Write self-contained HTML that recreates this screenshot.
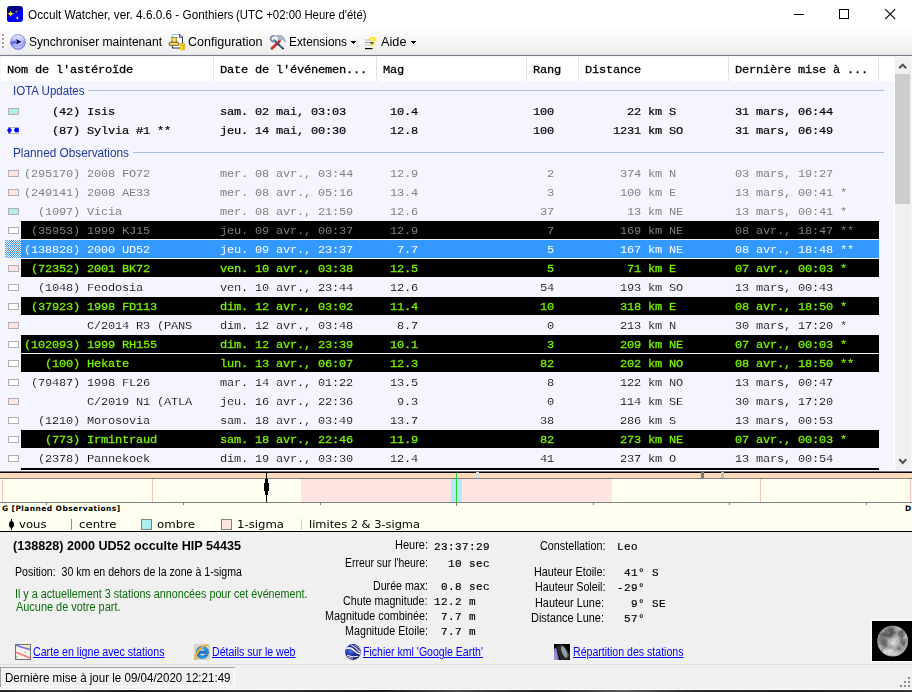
<!DOCTYPE html>
<html lang="fr"><head><meta charset="utf-8"><title>Occult Watcher</title>
<style>
html,body{margin:0;padding:0;}
body{width:912px;height:692px;overflow:hidden;background:#fff;position:relative;font-family:"Liberation Sans",sans-serif;}
.b{position:absolute;}
.t{position:absolute;white-space:pre;line-height:25px;height:25px;}
.fs{font-family:"Liberation Sans",sans-serif;}
.fm{font-family:"Liberation Mono",monospace;}
.fd{font-family:"DejaVu Sans","Liberation Sans",sans-serif;}
svg{position:absolute;overflow:visible;}
a.t{text-decoration:underline;}
</style></head><body>

<div class="b" style="left:0px;top:0px;width:912px;height:30px;background:#fff;"></div>
<svg style="left:7px;top:6px" width="16" height="16" viewBox="0 0 16 16">
<defs><clipPath id="ic"><rect x="0" y="0" width="16" height="16" rx="3.2"/></clipPath></defs>
<g clip-path="url(#ic)"><rect width="16" height="16" fill="#000084"/>
<path d="M16 2.5L0 10.5V16H16z" fill="#0000fa"/>
<path d="M13.5 16L16 13.5V16z" fill="#20d0ff"/>
<path d="M3.6 4.4l.75 2.25 2.9 1.05-2.9 1.05-.75 2.25-.75-2.25L0.2 7.7l2.650-1.05z" fill="#ffef10"/>
<circle cx="3.600" cy="7.7" r="1.5" fill="#ffff20"/>
<path d="M9.300 4.200l.5 1 1.100.4-1.100.4-.5 1.100-.5-1.100-1.100-.4 1.100-.4z" fill="#b8a820"/>
<path d="M10.300 10.300l.6 1.300 1.200.5-1.200.4-.6 1.200-.6-1.200-1.200-.4 1.200-.5z" fill="#f0e020"/>
</g></svg>
<span id="title" class="t fs" style="left:28px;top:3px;font-size:12.5px;color:#000;transform:scale(0.9410,1);transform-origin:0 16px;">Occult Watcher, ver. 4.6.0.6 - Gonthiers</span>
<span id="title2" class="t fs" style="left:236px;top:3px;font-size:12.5px;color:#000;transform:scale(0.9076,1);transform-origin:0 16px;">(UTC +02:00 Heure d'été)</span>
<svg style="left:780px;top:0" width="132" height="30" viewBox="0 0 132 30" shape-rendering="crispEdges">
<rect x="14" y="14" width="10" height="1" fill="#000"/>
<rect x="59.5" y="9.5" width="9" height="9" fill="none" stroke="#000" stroke-width="1"/>
<g shape-rendering="geometricPrecision"><path d="M105.2 9.200l10 10M115.2 9.200l-10 10" stroke="#000" stroke-width="1.1" fill="none"/></g>
</svg>
<div class="b" style="left:0px;top:30px;width:912px;height:25px;background:linear-gradient(#fcfcfc 0%,#f9f9f9 30%,#f2f2f2 65%,#ededed 95%,#dedee2 100%);"></div>
<div class="b" style="left:0px;top:55px;width:912px;height:1px;background:#787c88;"></div>
<div class="b" style="left:3px;top:35px;width:2px;height:2px;background:#fff;"></div>
<div class="b" style="left:2px;top:34px;width:2px;height:2px;background:#a2a2a2;"></div>
<div class="b" style="left:3px;top:39px;width:2px;height:2px;background:#fff;"></div>
<div class="b" style="left:2px;top:38px;width:2px;height:2px;background:#a2a2a2;"></div>
<div class="b" style="left:3px;top:43px;width:2px;height:2px;background:#fff;"></div>
<div class="b" style="left:2px;top:42px;width:2px;height:2px;background:#a2a2a2;"></div>
<div class="b" style="left:3px;top:47px;width:2px;height:2px;background:#fff;"></div>
<div class="b" style="left:2px;top:46px;width:2px;height:2px;background:#a2a2a2;"></div>
<svg style="left:10px;top:34px" width="16" height="16" viewBox="0 0 16 16">
<defs><radialGradient id="g1" cx="0.5" cy="0.4" r="0.7"><stop offset="0" stop-color="#dfe3ff"/><stop offset="0.5" stop-color="#a8b0f6"/><stop offset="1" stop-color="#6670e4"/></radialGradient><clipPath id="sc"><circle cx="8" cy="8" r="7.700"/></clipPath></defs>
<circle cx="8" cy="8" r="7.700" fill="url(#g1)"/>
<g clip-path="url(#sc)">
<path d="M0 8.500c2.500-1.600 5-2.200 7.500-1.500l-.3 2.700C5 9 2.500 9.800 0 11.500z" fill="#4c58dc" opacity="0.750"/>
<path d="M1 6.500c2.200-2 5-3 8-2.500 2 .4 3.800 1.300 5.500 2.800C13.500 3 11 1 8 1S2 3 1 6.500z" fill="#fff" opacity="0.500"/>
<path d="M2.500 11.500c1.500 2 3.500 3 5.500 3s4.200-1.200 5.500-3.500c-2 1.300-3.800 1.900-5.800 1.900s-3.700-.5-5.200-1.400z" fill="#e4e8ff" opacity="0.550"/>
</g>
<circle cx="8" cy="8" r="7.400" fill="none" stroke="#7880dc" stroke-width="0.700" stroke-dasharray="2.200 1.300"/>
<path d="M6 5L11.400 7.700L6.200 10.600L7.200 7.800z" fill="#060648"/>
</svg>
<span id="tb1" class="t fs" style="left:28.5px;top:30px;font-size:12.5px;color:#000;transform:scale(0.9618,1);transform-origin:0 16px;">Synchroniser maintenant</span>
<svg style="left:168px;top:33px" width="18" height="18" viewBox="0 0 18 18">
<path d="M4.500 1.500h7l3 3v10.500h-10z" fill="#fff"/>
<path d="M4.500 4V1.500h7" fill="none" stroke="#9cc0ec" stroke-width="1"/>
<path d="M11.500 1.500l3 3v10.500h-10v-2" fill="none" stroke="#2c3c58" stroke-width="1.100"/>
<path d="M11.500 1.500v3h3" fill="#c8d4e8" stroke="#2c3c58" stroke-width="0.8"/>
<path d="M3 4.500h6.500l-1.200 1.800 1 2.700h-6l1-2.700z" fill="#f2c838" stroke="#8a7a28" stroke-width="0.8"/>
<path d="M5.200 5l.8 3.500M7 5l-.3 3.500" stroke="#fff2a0" stroke-width="0.8"/>
<rect x="1" y="9.300" width="10" height="3.200" rx="0.8" fill="#d8b040" stroke="#6e6a28" stroke-width="0.8"/>
<rect x="2.500" y="10.500" width="7" height="0.9" fill="#fff4b0"/>
<rect x="12" y="11" width="5" height="6.300" rx="1.300" fill="#eab818"/>
<rect x="12.800" y="11.500" width="1.300" height="5.300" fill="#ffe060"/>
<ellipse cx="14.500" cy="11.300" rx="2.500" ry="1" fill="#f6d040" stroke="#b88c10" stroke-width="0.5"/>
</svg>
<span id="tb2" class="t fs" style="left:188px;top:30px;font-size:12.5px;color:#000;transform:scale(1.0019,1);transform-origin:0 16px;">Configuration</span>
<svg style="left:269px;top:33px" width="18" height="18" viewBox="0 0 18 18">
<path d="M10.500 8L3 15.300" stroke="#c82828" stroke-width="2.900" stroke-linecap="round"/>
<path d="M9.800 7.600L3 14" stroke="#f07060" stroke-width="0.900" stroke-linecap="round"/>
<path d="M6.500 3.300c2.500-1.600 6-1.200 7.800.8 1 1.100 1.700 2.500 2.200 4.200-.5.800-1.300 1-1.900.4-.2-1.200-.8-2.300-1.700-3l-1.800 2-2.300-2 1.300-1.800c-1.200-.4-2.400-.5-3.600-.6z" fill="#b4bed0" stroke="#7684a0" stroke-width="0.600"/>
<circle cx="14.700" cy="8.300" r="0.700" fill="#fff"/>
<path d="M5.400 7.200L14 15.500" stroke="#1c2c50" stroke-width="1.900" stroke-linecap="round"/>
<path d="M5.800 7.200L14 15.100" stroke="#fff" stroke-width="0.900" stroke-dasharray="0.900 0.900"/>
<path d="M5.700 3.300A2.700 2.700 0 1 0 6 7.800" fill="none" stroke="#7688a8" stroke-width="1.800"/>
<path d="M5 3.600A2 2 0 0 0 3 6" fill="none" stroke="#c8d4e8" stroke-width="0.800"/>
</svg>
<span id="tb3" class="t fs" style="left:288.5px;top:30px;font-size:12.5px;color:#000;transform:scale(0.9484,1);transform-origin:0 16px;">Extensions</span>
<svg style="left:351px;top:41px" width="6" height="4" viewBox="0 0 6 4" shape-rendering="crispEdges"><rect x="0" y="0" width="5" height="1"/><rect x="1" y="1" width="3" height="1"/><rect x="2" y="2" width="1" height="1"/></svg>
<svg style="left:364px;top:34px" width="14" height="17" viewBox="0 0 14 17">
<rect x="1" y="5.500" width="7" height="1" fill="#b8b8b8"/><rect x="1" y="8" width="7" height="1" fill="#9a9a9a"/><rect x="1" y="10.500" width="7" height="1" fill="#c8c8c8"/>
<rect x="1" y="14" width="7.500" height="1.200" fill="#000"/>
<text x="8.700" y="11.600" font-family="Liberation Sans, sans-serif" font-size="13" font-weight="bold" text-anchor="middle" fill="#ffe600" stroke="#ffe600" stroke-width="0.600">?</text>
<rect x="6.500" y="8.300" width="3" height="1.300" fill="#202020"/>
</svg>
<span id="tb4" class="t fs" style="left:381px;top:30px;font-size:12.5px;color:#000;transform:scale(1.0187,1);transform-origin:0 16px;">Aide</span>
<svg style="left:411px;top:41px" width="6" height="4" viewBox="0 0 6 4" shape-rendering="crispEdges"><rect x="0" y="0" width="5" height="1"/><rect x="1" y="1" width="3" height="1"/><rect x="2" y="2" width="1" height="1"/></svg>
<div class="b" style="left:0px;top:56px;width:912px;height:415px;background:#f5f5ff;"></div>
<div class="b" style="left:1px;top:57px;width:894px;height:24px;background:#fff;"></div>
<div class="b" style="left:894px;top:81px;width:1px;height:390px;background:#fff;"></div>
<div class="b" style="left:213px;top:57px;width:1px;height:24px;background:#e2e2e2;"></div>
<div class="b" style="left:376px;top:57px;width:1px;height:24px;background:#e2e2e2;"></div>
<div class="b" style="left:526px;top:57px;width:1px;height:24px;background:#e2e2e2;"></div>
<div class="b" style="left:578px;top:57px;width:1px;height:24px;background:#e2e2e2;"></div>
<div class="b" style="left:728px;top:57px;width:1px;height:24px;background:#e2e2e2;"></div>
<div class="b" style="left:878px;top:57px;width:1px;height:24px;background:#e2e2e2;"></div>
<span id="h0" class="t fm" style="left:7px;top:58px;font-size:12px;color:#000;-webkit-text-stroke:0.3px;letter-spacing:-0.201px;transform:scale(1.0000,0.85);transform-origin:0 15px;">Nom de l'astéroïde</span>
<span id="h1" class="t fm" style="left:220px;top:58px;font-size:12px;color:#000;-webkit-text-stroke:0.3px;letter-spacing:-0.202px;transform:scale(1.0000,0.85);transform-origin:0 15px;">Date de l'événemen...</span>
<span id="h2" class="t fm" style="left:383px;top:58px;font-size:12px;color:#000;-webkit-text-stroke:0.3px;letter-spacing:-0.203px;transform:scale(1.0000,0.85);transform-origin:0 15px;">Mag</span>
<span id="h3" class="t fm" style="left:533px;top:58px;font-size:12px;color:#000;-webkit-text-stroke:0.3px;letter-spacing:-0.203px;transform:scale(1.0000,0.85);transform-origin:0 15px;">Rang</span>
<span id="h4" class="t fm" style="left:585px;top:58px;font-size:12px;color:#000;-webkit-text-stroke:0.3px;letter-spacing:-0.201px;transform:scale(1.0000,0.85);transform-origin:0 15px;">Distance</span>
<span id="h5" class="t fm" style="left:735px;top:58px;font-size:12px;color:#000;-webkit-text-stroke:0.3px;letter-spacing:-0.201px;transform:scale(1.0000,0.85);transform-origin:0 15px;">Dernière mise à ...</span>
<div class="b" style="left:895px;top:57px;width:16px;height:414px;background:#f0f0f0;"></div>
<div class="b" style="left:895px;top:74px;width:15px;height:130px;background:#cdcdcd;"></div>
<svg style="left:895px;top:56px" width="16" height="18" viewBox="0 0 16 18"><path d="M4.200 12.300L7.700 8.600l3.500 3.700" fill="none" stroke="#505050" stroke-width="2"/></svg>
<svg style="left:895px;top:453px" width="16" height="18" viewBox="0 0 16 18"><path d="M4.200 6.300l3.500 3.700 3.500-3.700" fill="none" stroke="#505050" stroke-width="2"/></svg>
<span id="g1" class="t fs" style="left:13px;top:79px;font-size:12.5px;color:#1c389c;transform:scale(0.9215,1);transform-origin:0 16px;">IOTA Updates</span>
<div class="b" style="left:88px;top:90px;width:796px;height:1px;background:#a9bcd8;"></div>
<span id="g2" class="t fs" style="left:13px;top:141px;font-size:12.5px;color:#1c389c;transform:scale(0.9431,1);transform-origin:0 16px;">Planned Observations</span>
<div class="b" style="left:133px;top:152px;width:751px;height:1px;background:#a9bcd8;"></div>
<div class="b" style="left:8px;top:108px;width:9px;height:5px;background:#aeeeee;border:1px solid #b2aeb4;"></div>
<span id="r0c0" class="t fm" style="left:52px;top:100px;font-size:12px;color:#000;-webkit-text-stroke:0.2px;letter-spacing:-0.201px;transform:scale(1.0000,0.85);transform-origin:0 15px;">(42) Isis</span>
<span id="r0c1" class="t fm" style="left:220px;top:100px;font-size:12px;color:#000;-webkit-text-stroke:0.2px;letter-spacing:-0.201px;transform:scale(1.0000,0.85);transform-origin:0 15px;">sam. 02 mai, 03:03</span>
<span id="r0c2" class="t fm" style="left:390px;top:100px;font-size:12px;color:#000;-webkit-text-stroke:0.2px;letter-spacing:-0.203px;transform:scale(1.0000,0.85);transform-origin:0 15px;">10.4</span>
<span id="r0c3" class="t fm" style="left:533px;top:100px;font-size:12px;color:#000;-webkit-text-stroke:0.2px;letter-spacing:-0.203px;transform:scale(1.0000,0.85);transform-origin:0 15px;">100</span>
<span id="r0c4" class="t fm" style="left:627px;top:100px;font-size:12px;color:#000;-webkit-text-stroke:0.2px;letter-spacing:-0.203px;transform:scale(1.0000,0.85);transform-origin:0 15px;">22 km S</span>
<span id="r0c5" class="t fm" style="left:735px;top:100px;font-size:12px;color:#000;-webkit-text-stroke:0.2px;letter-spacing:-0.202px;transform:scale(1.0000,0.85);transform-origin:0 15px;">31 mars, 06:44</span>
<div class="b" style="left:8px;top:127px;width:9px;height:5px;background:#fff;border:1px solid #b4b4b4;"></div>
<svg style="left:6px;top:126px" width="14" height="9" viewBox="0 0 14 9"><path d="M3.500 1.400L5.700 4.300 3.500 7.300 1.300 4.300z" fill="#0000ff" stroke="#0000ff" stroke-width="0.600" stroke-linejoin="round"/><circle cx="10.600" cy="4.200" r="2.400" fill="#0000ff"/></svg>
<span id="r1c0" class="t fm" style="left:52px;top:119px;font-size:12px;color:#000;-webkit-text-stroke:0.2px;letter-spacing:-0.201px;transform:scale(1.0000,0.85);transform-origin:0 15px;">(87) Sylvia #1 **</span>
<span id="r1c1" class="t fm" style="left:220px;top:119px;font-size:12px;color:#000;-webkit-text-stroke:0.2px;letter-spacing:-0.201px;transform:scale(1.0000,0.85);transform-origin:0 15px;">jeu. 14 mai, 00:30</span>
<span id="r1c2" class="t fm" style="left:390px;top:119px;font-size:12px;color:#000;-webkit-text-stroke:0.2px;letter-spacing:-0.203px;transform:scale(1.0000,0.85);transform-origin:0 15px;">12.8</span>
<span id="r1c3" class="t fm" style="left:533px;top:119px;font-size:12px;color:#000;-webkit-text-stroke:0.2px;letter-spacing:-0.203px;transform:scale(1.0000,0.85);transform-origin:0 15px;">100</span>
<span id="r1c4" class="t fm" style="left:613px;top:119px;font-size:12px;color:#000;-webkit-text-stroke:0.2px;letter-spacing:-0.202px;transform:scale(1.0000,0.85);transform-origin:0 15px;">1231 km SO</span>
<span id="r1c5" class="t fm" style="left:735px;top:119px;font-size:12px;color:#000;-webkit-text-stroke:0.2px;letter-spacing:-0.202px;transform:scale(1.0000,0.85);transform-origin:0 15px;">31 mars, 06:49</span>
<div class="b" style="left:8px;top:170px;width:9px;height:5px;background:#ffe4e1;border:1px solid #b2aeb4;"></div>
<span id="r2c0" class="t fm" style="left:24px;top:162px;font-size:12px;color:#808080;letter-spacing:-0.201px;transform:scale(1.0000,0.85);transform-origin:0 15px;">(295170) 2008 FO72</span>
<span id="r2c1" class="t fm" style="left:220px;top:162px;font-size:12px;color:#808080;letter-spacing:-0.201px;transform:scale(1.0000,0.85);transform-origin:0 15px;">mer. 08 avr., 03:44</span>
<span id="r2c2" class="t fm" style="left:390px;top:162px;font-size:12px;color:#808080;letter-spacing:-0.203px;transform:scale(1.0000,0.85);transform-origin:0 15px;">12.9</span>
<span id="r2c3" class="t fm" style="left:547px;top:162px;font-size:12px;color:#808080;letter-spacing:-0.203px;transform:scale(1.0000,0.85);transform-origin:0 15px;">2</span>
<span id="r2c4" class="t fm" style="left:620px;top:162px;font-size:12px;color:#808080;letter-spacing:-0.201px;transform:scale(1.0000,0.85);transform-origin:0 15px;">374 km N</span>
<span id="r2c5" class="t fm" style="left:735px;top:162px;font-size:12px;color:#808080;letter-spacing:-0.202px;transform:scale(1.0000,0.85);transform-origin:0 15px;">03 mars, 19:27</span>
<div class="b" style="left:8px;top:189px;width:9px;height:5px;background:#ffe4e1;border:1px solid #b2aeb4;"></div>
<span id="r3c0" class="t fm" style="left:24px;top:181px;font-size:12px;color:#808080;letter-spacing:-0.201px;transform:scale(1.0000,0.85);transform-origin:0 15px;">(249141) 2008 AE33</span>
<span id="r3c1" class="t fm" style="left:220px;top:181px;font-size:12px;color:#808080;letter-spacing:-0.201px;transform:scale(1.0000,0.85);transform-origin:0 15px;">mer. 08 avr., 05:16</span>
<span id="r3c2" class="t fm" style="left:390px;top:181px;font-size:12px;color:#808080;letter-spacing:-0.203px;transform:scale(1.0000,0.85);transform-origin:0 15px;">13.4</span>
<span id="r3c3" class="t fm" style="left:547px;top:181px;font-size:12px;color:#808080;letter-spacing:-0.203px;transform:scale(1.0000,0.85);transform-origin:0 15px;">3</span>
<span id="r3c4" class="t fm" style="left:620px;top:181px;font-size:12px;color:#808080;letter-spacing:-0.201px;transform:scale(1.0000,0.85);transform-origin:0 15px;">100 km E</span>
<span id="r3c5" class="t fm" style="left:735px;top:181px;font-size:12px;color:#808080;letter-spacing:-0.201px;transform:scale(1.0000,0.85);transform-origin:0 15px;">13 mars, 00:41 *</span>
<div class="b" style="left:8px;top:208px;width:9px;height:5px;background:#aeeeee;border:1px solid #b2aeb4;"></div>
<span id="r4c0" class="t fm" style="left:38px;top:200px;font-size:12px;color:#808080;letter-spacing:-0.202px;transform:scale(1.0000,0.85);transform-origin:0 15px;">(1097) Vicia</span>
<span id="r4c1" class="t fm" style="left:220px;top:200px;font-size:12px;color:#808080;letter-spacing:-0.201px;transform:scale(1.0000,0.85);transform-origin:0 15px;">mer. 08 avr., 21:59</span>
<span id="r4c2" class="t fm" style="left:390px;top:200px;font-size:12px;color:#808080;letter-spacing:-0.203px;transform:scale(1.0000,0.85);transform-origin:0 15px;">12.6</span>
<span id="r4c3" class="t fm" style="left:540px;top:200px;font-size:12px;color:#808080;letter-spacing:-0.203px;transform:scale(1.0000,0.85);transform-origin:0 15px;">37</span>
<span id="r4c4" class="t fm" style="left:627px;top:200px;font-size:12px;color:#808080;letter-spacing:-0.201px;transform:scale(1.0000,0.85);transform-origin:0 15px;">13 km NE</span>
<span id="r4c5" class="t fm" style="left:735px;top:200px;font-size:12px;color:#808080;letter-spacing:-0.201px;transform:scale(1.0000,0.85);transform-origin:0 15px;">13 mars, 00:41 *</span>
<div class="b" style="left:21px;top:221px;width:858px;height:18px;background:#000;"></div>
<div class="b" style="left:8px;top:227px;width:9px;height:5px;background:#ffffff;border:1px solid #b2aeb4;"></div>
<span id="r5c0" class="t fm" style="left:31px;top:219px;font-size:12px;color:#808080;letter-spacing:-0.201px;transform:scale(1.0000,0.85);transform-origin:0 15px;">(35953) 1999 KJ15</span>
<span id="r5c1" class="t fm" style="left:220px;top:219px;font-size:12px;color:#808080;letter-spacing:-0.201px;transform:scale(1.0000,0.85);transform-origin:0 15px;">jeu. 09 avr., 00:37</span>
<span id="r5c2" class="t fm" style="left:390px;top:219px;font-size:12px;color:#808080;letter-spacing:-0.203px;transform:scale(1.0000,0.85);transform-origin:0 15px;">12.9</span>
<span id="r5c3" class="t fm" style="left:547px;top:219px;font-size:12px;color:#808080;letter-spacing:-0.203px;transform:scale(1.0000,0.85);transform-origin:0 15px;">7</span>
<span id="r5c4" class="t fm" style="left:620px;top:219px;font-size:12px;color:#808080;letter-spacing:-0.201px;transform:scale(1.0000,0.85);transform-origin:0 15px;">169 km NE</span>
<span id="r5c5" class="t fm" style="left:735px;top:219px;font-size:12px;color:#808080;letter-spacing:-0.201px;transform:scale(1.0000,0.85);transform-origin:0 15px;">08 avr., 18:47 **</span>
<div class="b" style="left:21px;top:240px;width:858px;height:18px;background:#3399ff;"></div>
<svg style="left:5px;top:240px" width="16" height="18" viewBox="0 0 16 18" shape-rendering="crispEdges"><defs><pattern id="dp" width="2" height="2" patternUnits="userSpaceOnUse"><rect width="2" height="2" fill="#fff"/><rect width="1" height="1" fill="#3399ff"/><rect x="1" y="1" width="1" height="1" fill="#3399ff"/></pattern></defs><rect width="16" height="18" fill="url(#dp)"/><rect x="3.5" y="6.5" width="10" height="6" fill="none" stroke="#a8b4c8" stroke-width="1"/></svg>
<span id="r6c0" class="t fm" style="left:24px;top:238px;font-size:12px;color:#fff;letter-spacing:-0.201px;transform:scale(1.0000,0.85);transform-origin:0 15px;">(138828) 2000 UD52</span>
<span id="r6c1" class="t fm" style="left:220px;top:238px;font-size:12px;color:#fff;letter-spacing:-0.201px;transform:scale(1.0000,0.85);transform-origin:0 15px;">jeu. 09 avr., 23:37</span>
<span id="r6c2" class="t fm" style="left:397px;top:238px;font-size:12px;color:#fff;letter-spacing:-0.203px;transform:scale(1.0000,0.85);transform-origin:0 15px;">7.7</span>
<span id="r6c3" class="t fm" style="left:547px;top:238px;font-size:12px;color:#fff;letter-spacing:-0.203px;transform:scale(1.0000,0.85);transform-origin:0 15px;">5</span>
<span id="r6c4" class="t fm" style="left:620px;top:238px;font-size:12px;color:#fff;letter-spacing:-0.201px;transform:scale(1.0000,0.85);transform-origin:0 15px;">167 km NE</span>
<span id="r6c5" class="t fm" style="left:735px;top:238px;font-size:12px;color:#fff;letter-spacing:-0.201px;transform:scale(1.0000,0.85);transform-origin:0 15px;">08 avr., 18:48 **</span>
<div class="b" style="left:21px;top:259px;width:858px;height:18px;background:#000;"></div>
<div class="b" style="left:8px;top:265px;width:9px;height:5px;background:#ffe4e1;border:1px solid #b2aeb4;"></div>
<span id="r7c0" class="t fm" style="left:31px;top:257px;font-size:12px;color:#78f000;-webkit-text-stroke:0.3px;letter-spacing:-0.201px;transform:scale(1.0000,0.85);transform-origin:0 15px;">(72352) 2001 BK72</span>
<span id="r7c1" class="t fm" style="left:220px;top:257px;font-size:12px;color:#78f000;-webkit-text-stroke:0.3px;letter-spacing:-0.201px;transform:scale(1.0000,0.85);transform-origin:0 15px;">ven. 10 avr., 03:38</span>
<span id="r7c2" class="t fm" style="left:390px;top:257px;font-size:12px;color:#78f000;-webkit-text-stroke:0.3px;letter-spacing:-0.203px;transform:scale(1.0000,0.85);transform-origin:0 15px;">12.5</span>
<span id="r7c3" class="t fm" style="left:547px;top:257px;font-size:12px;color:#78f000;-webkit-text-stroke:0.3px;letter-spacing:-0.203px;transform:scale(1.0000,0.85);transform-origin:0 15px;">5</span>
<span id="r7c4" class="t fm" style="left:627px;top:257px;font-size:12px;color:#78f000;-webkit-text-stroke:0.3px;letter-spacing:-0.203px;transform:scale(1.0000,0.85);transform-origin:0 15px;">71 km E</span>
<span id="r7c5" class="t fm" style="left:735px;top:257px;font-size:12px;color:#78f000;-webkit-text-stroke:0.3px;letter-spacing:-0.201px;transform:scale(1.0000,0.85);transform-origin:0 15px;">07 avr., 00:03 *</span>
<div class="b" style="left:8px;top:284px;width:9px;height:5px;background:#ffffff;border:1px solid #b2aeb4;"></div>
<span id="r8c0" class="t fm" style="left:38px;top:276px;font-size:12px;color:#000;letter-spacing:-0.202px;transform:scale(1.0000,0.85);transform-origin:0 15px;-webkit-text-stroke:0.14px #f5f5ff;">(1048) Feodosia</span>
<span id="r8c1" class="t fm" style="left:220px;top:276px;font-size:12px;color:#000;letter-spacing:-0.201px;transform:scale(1.0000,0.85);transform-origin:0 15px;-webkit-text-stroke:0.14px #f5f5ff;">ven. 10 avr., 23:44</span>
<span id="r8c2" class="t fm" style="left:390px;top:276px;font-size:12px;color:#000;letter-spacing:-0.203px;transform:scale(1.0000,0.85);transform-origin:0 15px;-webkit-text-stroke:0.14px #f5f5ff;">12.6</span>
<span id="r8c3" class="t fm" style="left:540px;top:276px;font-size:12px;color:#000;letter-spacing:-0.203px;transform:scale(1.0000,0.85);transform-origin:0 15px;-webkit-text-stroke:0.14px #f5f5ff;">54</span>
<span id="r8c4" class="t fm" style="left:620px;top:276px;font-size:12px;color:#000;letter-spacing:-0.201px;transform:scale(1.0000,0.85);transform-origin:0 15px;-webkit-text-stroke:0.14px #f5f5ff;">193 km SO</span>
<span id="r8c5" class="t fm" style="left:735px;top:276px;font-size:12px;color:#000;letter-spacing:-0.202px;transform:scale(1.0000,0.85);transform-origin:0 15px;-webkit-text-stroke:0.14px #f5f5ff;">13 mars, 00:43</span>
<div class="b" style="left:21px;top:297px;width:858px;height:18px;background:#000;"></div>
<div class="b" style="left:8px;top:303px;width:9px;height:5px;background:#ffffff;border:1px solid #b2aeb4;"></div>
<span id="r9c0" class="t fm" style="left:31px;top:295px;font-size:12px;color:#78f000;-webkit-text-stroke:0.3px;letter-spacing:-0.201px;transform:scale(1.0000,0.85);transform-origin:0 15px;">(37923) 1998 FD113</span>
<span id="r9c1" class="t fm" style="left:220px;top:295px;font-size:12px;color:#78f000;-webkit-text-stroke:0.3px;letter-spacing:-0.201px;transform:scale(1.0000,0.85);transform-origin:0 15px;">dim. 12 avr., 03:02</span>
<span id="r9c2" class="t fm" style="left:390px;top:295px;font-size:12px;color:#78f000;-webkit-text-stroke:0.3px;letter-spacing:-0.203px;transform:scale(1.0000,0.85);transform-origin:0 15px;">11.4</span>
<span id="r9c3" class="t fm" style="left:540px;top:295px;font-size:12px;color:#78f000;-webkit-text-stroke:0.3px;letter-spacing:-0.203px;transform:scale(1.0000,0.85);transform-origin:0 15px;">10</span>
<span id="r9c4" class="t fm" style="left:620px;top:295px;font-size:12px;color:#78f000;-webkit-text-stroke:0.3px;letter-spacing:-0.201px;transform:scale(1.0000,0.85);transform-origin:0 15px;">318 km E</span>
<span id="r9c5" class="t fm" style="left:735px;top:295px;font-size:12px;color:#78f000;-webkit-text-stroke:0.3px;letter-spacing:-0.201px;transform:scale(1.0000,0.85);transform-origin:0 15px;">08 avr., 18:50 *</span>
<div class="b" style="left:8px;top:322px;width:9px;height:5px;background:#ffe4e1;border:1px solid #b2aeb4;"></div>
<span id="r10c0" class="t fm" style="left:87px;top:314px;font-size:12px;color:#000;letter-spacing:-0.202px;transform:scale(1.0000,0.85);transform-origin:0 15px;-webkit-text-stroke:0.14px #f5f5ff;">C/2014 R3 (PANS</span>
<span id="r10c1" class="t fm" style="left:220px;top:314px;font-size:12px;color:#000;letter-spacing:-0.201px;transform:scale(1.0000,0.85);transform-origin:0 15px;-webkit-text-stroke:0.14px #f5f5ff;">dim. 12 avr., 03:48</span>
<span id="r10c2" class="t fm" style="left:397px;top:314px;font-size:12px;color:#000;letter-spacing:-0.203px;transform:scale(1.0000,0.85);transform-origin:0 15px;-webkit-text-stroke:0.14px #f5f5ff;">8.7</span>
<span id="r10c3" class="t fm" style="left:547px;top:314px;font-size:12px;color:#000;letter-spacing:-0.203px;transform:scale(1.0000,0.85);transform-origin:0 15px;-webkit-text-stroke:0.14px #f5f5ff;">0</span>
<span id="r10c4" class="t fm" style="left:620px;top:314px;font-size:12px;color:#000;letter-spacing:-0.201px;transform:scale(1.0000,0.85);transform-origin:0 15px;-webkit-text-stroke:0.14px #f5f5ff;">213 km N</span>
<span id="r10c5" class="t fm" style="left:735px;top:314px;font-size:12px;color:#000;letter-spacing:-0.201px;transform:scale(1.0000,0.85);transform-origin:0 15px;-webkit-text-stroke:0.14px #f5f5ff;">30 mars, 17:20 *</span>
<div class="b" style="left:21px;top:335px;width:858px;height:18px;background:#000;"></div>
<div class="b" style="left:8px;top:341px;width:9px;height:5px;background:#ffffff;border:1px solid #b2aeb4;"></div>
<span id="r11c0" class="t fm" style="left:24px;top:333px;font-size:12px;color:#78f000;-webkit-text-stroke:0.3px;letter-spacing:-0.201px;transform:scale(1.0000,0.85);transform-origin:0 15px;">(102093) 1999 RH155</span>
<span id="r11c1" class="t fm" style="left:220px;top:333px;font-size:12px;color:#78f000;-webkit-text-stroke:0.3px;letter-spacing:-0.201px;transform:scale(1.0000,0.85);transform-origin:0 15px;">dim. 12 avr., 23:39</span>
<span id="r11c2" class="t fm" style="left:390px;top:333px;font-size:12px;color:#78f000;-webkit-text-stroke:0.3px;letter-spacing:-0.203px;transform:scale(1.0000,0.85);transform-origin:0 15px;">10.1</span>
<span id="r11c3" class="t fm" style="left:547px;top:333px;font-size:12px;color:#78f000;-webkit-text-stroke:0.3px;letter-spacing:-0.203px;transform:scale(1.0000,0.85);transform-origin:0 15px;">3</span>
<span id="r11c4" class="t fm" style="left:620px;top:333px;font-size:12px;color:#78f000;-webkit-text-stroke:0.3px;letter-spacing:-0.201px;transform:scale(1.0000,0.85);transform-origin:0 15px;">209 km NE</span>
<span id="r11c5" class="t fm" style="left:735px;top:333px;font-size:12px;color:#78f000;-webkit-text-stroke:0.3px;letter-spacing:-0.201px;transform:scale(1.0000,0.85);transform-origin:0 15px;">07 avr., 00:03 *</span>
<div class="b" style="left:21px;top:354px;width:858px;height:18px;background:#000;"></div>
<div class="b" style="left:8px;top:360px;width:9px;height:5px;background:#ffffff;border:1px solid #b2aeb4;"></div>
<span id="r12c0" class="t fm" style="left:45px;top:352px;font-size:12px;color:#78f000;-webkit-text-stroke:0.3px;letter-spacing:-0.202px;transform:scale(1.0000,0.85);transform-origin:0 15px;">(100) Hekate</span>
<span id="r12c1" class="t fm" style="left:220px;top:352px;font-size:12px;color:#78f000;-webkit-text-stroke:0.3px;letter-spacing:-0.201px;transform:scale(1.0000,0.85);transform-origin:0 15px;">lun. 13 avr., 06:07</span>
<span id="r12c2" class="t fm" style="left:390px;top:352px;font-size:12px;color:#78f000;-webkit-text-stroke:0.3px;letter-spacing:-0.203px;transform:scale(1.0000,0.85);transform-origin:0 15px;">12.3</span>
<span id="r12c3" class="t fm" style="left:540px;top:352px;font-size:12px;color:#78f000;-webkit-text-stroke:0.3px;letter-spacing:-0.203px;transform:scale(1.0000,0.85);transform-origin:0 15px;">82</span>
<span id="r12c4" class="t fm" style="left:620px;top:352px;font-size:12px;color:#78f000;-webkit-text-stroke:0.3px;letter-spacing:-0.201px;transform:scale(1.0000,0.85);transform-origin:0 15px;">202 km NO</span>
<span id="r12c5" class="t fm" style="left:735px;top:352px;font-size:12px;color:#78f000;-webkit-text-stroke:0.3px;letter-spacing:-0.201px;transform:scale(1.0000,0.85);transform-origin:0 15px;">08 avr., 18:50 **</span>
<div class="b" style="left:8px;top:379px;width:9px;height:5px;background:#ffffff;border:1px solid #b2aeb4;"></div>
<span id="r13c0" class="t fm" style="left:31px;top:371px;font-size:12px;color:#000;letter-spacing:-0.201px;transform:scale(1.0000,0.85);transform-origin:0 15px;-webkit-text-stroke:0.14px #f5f5ff;">(79487) 1998 FL26</span>
<span id="r13c1" class="t fm" style="left:220px;top:371px;font-size:12px;color:#000;letter-spacing:-0.201px;transform:scale(1.0000,0.85);transform-origin:0 15px;-webkit-text-stroke:0.14px #f5f5ff;">mar. 14 avr., 01:22</span>
<span id="r13c2" class="t fm" style="left:390px;top:371px;font-size:12px;color:#000;letter-spacing:-0.203px;transform:scale(1.0000,0.85);transform-origin:0 15px;-webkit-text-stroke:0.14px #f5f5ff;">13.5</span>
<span id="r13c3" class="t fm" style="left:547px;top:371px;font-size:12px;color:#000;letter-spacing:-0.203px;transform:scale(1.0000,0.85);transform-origin:0 15px;-webkit-text-stroke:0.14px #f5f5ff;">8</span>
<span id="r13c4" class="t fm" style="left:620px;top:371px;font-size:12px;color:#000;letter-spacing:-0.201px;transform:scale(1.0000,0.85);transform-origin:0 15px;-webkit-text-stroke:0.14px #f5f5ff;">122 km NO</span>
<span id="r13c5" class="t fm" style="left:735px;top:371px;font-size:12px;color:#000;letter-spacing:-0.202px;transform:scale(1.0000,0.85);transform-origin:0 15px;-webkit-text-stroke:0.14px #f5f5ff;">13 mars, 00:47</span>
<div class="b" style="left:8px;top:398px;width:9px;height:5px;background:#ffe4e1;border:1px solid #b2aeb4;"></div>
<span id="r14c0" class="t fm" style="left:87px;top:390px;font-size:12px;color:#000;letter-spacing:-0.202px;transform:scale(1.0000,0.85);transform-origin:0 15px;-webkit-text-stroke:0.14px #f5f5ff;">C/2019 N1 (ATLA</span>
<span id="r14c1" class="t fm" style="left:220px;top:390px;font-size:12px;color:#000;letter-spacing:-0.201px;transform:scale(1.0000,0.85);transform-origin:0 15px;-webkit-text-stroke:0.14px #f5f5ff;">jeu. 16 avr., 22:36</span>
<span id="r14c2" class="t fm" style="left:397px;top:390px;font-size:12px;color:#000;letter-spacing:-0.203px;transform:scale(1.0000,0.85);transform-origin:0 15px;-webkit-text-stroke:0.14px #f5f5ff;">9.3</span>
<span id="r14c3" class="t fm" style="left:547px;top:390px;font-size:12px;color:#000;letter-spacing:-0.203px;transform:scale(1.0000,0.85);transform-origin:0 15px;-webkit-text-stroke:0.14px #f5f5ff;">0</span>
<span id="r14c4" class="t fm" style="left:620px;top:390px;font-size:12px;color:#000;letter-spacing:-0.201px;transform:scale(1.0000,0.85);transform-origin:0 15px;-webkit-text-stroke:0.14px #f5f5ff;">114 km SE</span>
<span id="r14c5" class="t fm" style="left:735px;top:390px;font-size:12px;color:#000;letter-spacing:-0.202px;transform:scale(1.0000,0.85);transform-origin:0 15px;-webkit-text-stroke:0.14px #f5f5ff;">30 mars, 17:20</span>
<div class="b" style="left:8px;top:417px;width:9px;height:5px;background:#ffffff;border:1px solid #b2aeb4;"></div>
<span id="r15c0" class="t fm" style="left:38px;top:409px;font-size:12px;color:#000;letter-spacing:-0.201px;transform:scale(1.0000,0.85);transform-origin:0 15px;-webkit-text-stroke:0.14px #f5f5ff;">(1210) Morosovia</span>
<span id="r15c1" class="t fm" style="left:220px;top:409px;font-size:12px;color:#000;letter-spacing:-0.201px;transform:scale(1.0000,0.85);transform-origin:0 15px;-webkit-text-stroke:0.14px #f5f5ff;">sam. 18 avr., 03:49</span>
<span id="r15c2" class="t fm" style="left:390px;top:409px;font-size:12px;color:#000;letter-spacing:-0.203px;transform:scale(1.0000,0.85);transform-origin:0 15px;-webkit-text-stroke:0.14px #f5f5ff;">13.7</span>
<span id="r15c3" class="t fm" style="left:540px;top:409px;font-size:12px;color:#000;letter-spacing:-0.203px;transform:scale(1.0000,0.85);transform-origin:0 15px;-webkit-text-stroke:0.14px #f5f5ff;">38</span>
<span id="r15c4" class="t fm" style="left:620px;top:409px;font-size:12px;color:#000;letter-spacing:-0.201px;transform:scale(1.0000,0.85);transform-origin:0 15px;-webkit-text-stroke:0.14px #f5f5ff;">286 km S</span>
<span id="r15c5" class="t fm" style="left:735px;top:409px;font-size:12px;color:#000;letter-spacing:-0.202px;transform:scale(1.0000,0.85);transform-origin:0 15px;-webkit-text-stroke:0.14px #f5f5ff;">13 mars, 00:53</span>
<div class="b" style="left:21px;top:430px;width:858px;height:18px;background:#000;"></div>
<div class="b" style="left:8px;top:436px;width:9px;height:5px;background:#ffffff;border:1px solid #b2aeb4;"></div>
<span id="r16c0" class="t fm" style="left:45px;top:428px;font-size:12px;color:#78f000;-webkit-text-stroke:0.3px;letter-spacing:-0.201px;transform:scale(1.0000,0.85);transform-origin:0 15px;">(773) Irmintraud</span>
<span id="r16c1" class="t fm" style="left:220px;top:428px;font-size:12px;color:#78f000;-webkit-text-stroke:0.3px;letter-spacing:-0.201px;transform:scale(1.0000,0.85);transform-origin:0 15px;">sam. 18 avr., 22:46</span>
<span id="r16c2" class="t fm" style="left:390px;top:428px;font-size:12px;color:#78f000;-webkit-text-stroke:0.3px;letter-spacing:-0.203px;transform:scale(1.0000,0.85);transform-origin:0 15px;">11.9</span>
<span id="r16c3" class="t fm" style="left:540px;top:428px;font-size:12px;color:#78f000;-webkit-text-stroke:0.3px;letter-spacing:-0.203px;transform:scale(1.0000,0.85);transform-origin:0 15px;">82</span>
<span id="r16c4" class="t fm" style="left:620px;top:428px;font-size:12px;color:#78f000;-webkit-text-stroke:0.3px;letter-spacing:-0.201px;transform:scale(1.0000,0.85);transform-origin:0 15px;">273 km NE</span>
<span id="r16c5" class="t fm" style="left:735px;top:428px;font-size:12px;color:#78f000;-webkit-text-stroke:0.3px;letter-spacing:-0.201px;transform:scale(1.0000,0.85);transform-origin:0 15px;">07 avr., 00:03 *</span>
<div class="b" style="left:8px;top:455px;width:9px;height:5px;background:#ffffff;border:1px solid #b2aeb4;"></div>
<span id="r17c0" class="t fm" style="left:38px;top:447px;font-size:12px;color:#000;letter-spacing:-0.201px;transform:scale(1.0000,0.85);transform-origin:0 15px;-webkit-text-stroke:0.14px #f5f5ff;">(2378) Pannekoek</span>
<span id="r17c1" class="t fm" style="left:220px;top:447px;font-size:12px;color:#000;letter-spacing:-0.201px;transform:scale(1.0000,0.85);transform-origin:0 15px;-webkit-text-stroke:0.14px #f5f5ff;">dim. 19 avr., 03:30</span>
<span id="r17c2" class="t fm" style="left:390px;top:447px;font-size:12px;color:#000;letter-spacing:-0.203px;transform:scale(1.0000,0.85);transform-origin:0 15px;-webkit-text-stroke:0.14px #f5f5ff;">12.4</span>
<span id="r17c3" class="t fm" style="left:540px;top:447px;font-size:12px;color:#000;letter-spacing:-0.203px;transform:scale(1.0000,0.85);transform-origin:0 15px;-webkit-text-stroke:0.14px #f5f5ff;">41</span>
<span id="r17c4" class="t fm" style="left:620px;top:447px;font-size:12px;color:#000;letter-spacing:-0.201px;transform:scale(1.0000,0.85);transform-origin:0 15px;-webkit-text-stroke:0.14px #f5f5ff;">237 km O</span>
<span id="r17c5" class="t fm" style="left:735px;top:447px;font-size:12px;color:#000;letter-spacing:-0.202px;transform:scale(1.0000,0.85);transform-origin:0 15px;-webkit-text-stroke:0.14px #f5f5ff;">13 mars, 00:54</span>
<div class="b" style="left:21px;top:468px;width:858px;height:2px;background:#000;"></div>
<div class="b" style="left:0px;top:470px;width:912px;height:1px;background:#fbfbff;"></div>
<div class="b" style="left:0px;top:471px;width:912px;height:1px;background:#6c7080;"></div>
<div class="b" style="left:0px;top:472px;width:912px;height:1px;background:#000;"></div>
<div class="b" style="left:0px;top:473px;width:912px;height:5px;background:#ffdab9;"></div>
<div class="b" style="left:0px;top:478px;width:912px;height:1px;background:#808080;"></div>
<div class="b" style="left:0px;top:479px;width:912px;height:52px;background:#fffff0;"></div>
<div class="b" style="left:301px;top:479px;width:311px;height:23px;background:#ffe4e1;"></div>
<div class="b" style="left:451px;top:479px;width:11px;height:23px;background:#aeeeee;"></div>
<div class="b" style="left:456px;top:473px;width:1px;height:29px;background:#32cd32;"></div>
<div class="b" style="left:2px;top:479px;width:1px;height:23px;background:#ffc0c0;"></div>
<div class="b" style="left:152px;top:479px;width:1px;height:23px;background:#ffc0c0;"></div>
<div class="b" style="left:760px;top:479px;width:1px;height:23px;background:#ffc0c0;"></div>
<div class="b" style="left:910px;top:479px;width:1px;height:23px;background:#ffc0c0;"></div>
<div class="b" style="left:0px;top:502px;width:912px;height:1px;background:#808080;"></div>
<div class="b" style="left:46px;top:503px;width:1px;height:2px;background:#808080;"></div>
<div class="b" style="left:183px;top:503px;width:1px;height:2px;background:#808080;"></div>
<div class="b" style="left:320px;top:503px;width:1px;height:2px;background:#808080;"></div>
<div class="b" style="left:456px;top:503px;width:1px;height:3px;background:#808080;"></div>
<div class="b" style="left:593px;top:503px;width:1px;height:2px;background:#808080;"></div>
<div class="b" style="left:729px;top:503px;width:1px;height:2px;background:#808080;"></div>
<div class="b" style="left:866px;top:503px;width:1px;height:2px;background:#808080;"></div>
<div class="b" style="left:476px;top:472px;width:3px;height:6px;background:#dcdcdc;"></div>
<div class="b" style="left:701px;top:472px;width:3px;height:6px;background:#787878;"></div>
<div class="b" style="left:721px;top:472px;width:3px;height:6px;background:#c0c0c0;"></div>
<div class="b" style="left:266px;top:473px;width:1px;height:29px;background:#000;"></div>
<div class="b" style="left:265px;top:479px;width:3px;height:16px;background:#000;"></div>
<div class="b" style="left:264px;top:483px;width:5px;height:8px;background:#000;"></div>
<span id="cg" class="t fd" style="left:2px;top:496px;font-size:7.5px;color:#000;font-weight:bold;letter-spacing:0.414px;">G [Planned Observations]</span>
<span id="cd" class="t fd" style="left:905px;top:496px;font-size:7.5px;color:#000;font-weight:bold;">D</span>
<svg style="left:8px;top:519px" width="7" height="11" viewBox="0 0 7 11"><rect x="3" y="0" width="1" height="11" fill="#000"/><path d="M3.5 1L6 4v3L3.5 10 1 7V4z" fill="#000"/></svg>
<span id="l1" class="t fd" style="left:19px;top:511.5px;font-size:11px;color:#000;transform:scale(1.0596,1);transform-origin:0 16px;">vous</span>
<div class="b" style="left:71px;top:519px;width:1px;height:11px;background:#32cd32;"></div>
<span id="l2" class="t fd" style="left:78.5px;top:511.5px;font-size:11px;color:#000;transform:scale(1.0667,1);transform-origin:0 16px;">centre</span>
<div class="b" style="left:141px;top:519px;width:11px;height:11px;background:#aeeeee;border:1px solid #808080;box-sizing:border-box;"></div>
<span id="l3" class="t fd" style="left:156.5px;top:511.5px;font-size:11px;color:#000;transform:scale(1.0709,1);transform-origin:0 16px;">ombre</span>
<div class="b" style="left:221px;top:519px;width:11px;height:11px;background:#ffe4e1;border:1px solid #808080;box-sizing:border-box;"></div>
<span id="l4" class="t fd" style="left:236.5px;top:511.5px;font-size:11px;color:#000;transform:scale(1.0633,1);transform-origin:0 16px;">1-sigma</span>
<div class="b" style="left:301px;top:519px;width:1px;height:11px;background:#ffc0c0;"></div>
<span id="l5" class="t fd" style="left:309px;top:511.5px;font-size:11px;color:#000;transform:scale(1.0377,1);transform-origin:0 16px;">limites 2 &amp; 3-sigma</span>
<div class="b" style="left:0px;top:531px;width:912px;height:1px;background:#000;"></div>
<div class="b" style="left:0px;top:532px;width:912px;height:158px;background:#f0f0f0;"></div>
<span id="dt" class="t fs" style="left:13px;top:533px;font-size:13px;color:#000;font-weight:bold;transform:scale(0.9687,1);transform-origin:0 17px;">(138828) 2000 UD52 occulte HIP 54435</span>
<span id="dp" class="t fs" style="left:15px;top:560px;font-size:12px;color:#000;transform:scale(0.8839,1);transform-origin:0 16px;">Position:  30 km en dehors de la zone à 1-sigma</span>
<span id="dg1" class="t fs" style="left:14.8px;top:582px;font-size:12px;color:#0a6e0a;transform:scale(0.8967,1);transform-origin:0 16px;">Il y a actuellement 3 stations annoncées pour cet événement.</span>
<span id="dg2" class="t fs" style="left:16px;top:595px;font-size:12px;color:#0a6e0a;transform:scale(0.9107,1);transform-origin:0 16px;">Aucune de votre part.</span>
<span id="ml0" class="t fs" style="left:394.5px;top:533px;font-size:12px;color:#000;transform:scale(0.9159,1);transform-origin:0 16px;">Heure:</span>
<span id="ml1" class="t fs" style="left:344.5px;top:551px;font-size:12px;color:#000;transform:scale(0.8675,1);transform-origin:0 16px;">Erreur sur l'heure:</span>
<span id="ml2" class="t fs" style="left:372.5px;top:574px;font-size:12px;color:#000;transform:scale(0.8866,1);transform-origin:0 16px;">Durée max:</span>
<span id="ml3" class="t fs" style="left:343px;top:589px;font-size:12px;color:#000;transform:scale(0.8920,1);transform-origin:0 16px;">Chute magnitude:</span>
<span id="ml4" class="t fs" style="left:324.5px;top:604px;font-size:12px;color:#000;transform:scale(0.8976,1);transform-origin:0 16px;">Magnitude combinée:</span>
<span id="ml5" class="t fs" style="left:344.5px;top:619px;font-size:12px;color:#000;transform:scale(0.8950,1);transform-origin:0 16px;">Magnitude Etoile:</span>
<span id="mv0" class="t fm" style="left:434px;top:535px;font-size:11px;color:#000;-webkit-text-stroke:0.2px;letter-spacing:0.398px;transform:scale(1.0000,0.93);transform-origin:0 15px;">23:37:29</span>
<span id="mv1" class="t fm" style="left:448px;top:552px;font-size:11px;color:#000;-webkit-text-stroke:0.2px;letter-spacing:0.398px;transform:scale(1.0000,0.93);transform-origin:0 15px;">10 sec</span>
<span id="mv2" class="t fm" style="left:441px;top:575px;font-size:11px;color:#000;-webkit-text-stroke:0.2px;letter-spacing:0.397px;transform:scale(1.0000,0.93);transform-origin:0 15px;">0.8 sec</span>
<span id="mv3" class="t fm" style="left:434px;top:590px;font-size:11px;color:#000;-webkit-text-stroke:0.2px;letter-spacing:0.398px;transform:scale(1.0000,0.93);transform-origin:0 15px;">12.2 m</span>
<span id="mv4" class="t fm" style="left:441px;top:605px;font-size:11px;color:#000;-webkit-text-stroke:0.2px;letter-spacing:0.397px;transform:scale(1.0000,0.93);transform-origin:0 15px;">7.7 m</span>
<span id="mv5" class="t fm" style="left:441px;top:620px;font-size:11px;color:#000;-webkit-text-stroke:0.2px;letter-spacing:0.397px;transform:scale(1.0000,0.93);transform-origin:0 15px;">7.7 m</span>
<span id="rl0" class="t fs" style="left:539.5px;top:534px;font-size:12px;color:#000;transform:scale(0.9007,1);transform-origin:0 16px;">Constellation:</span>
<span id="rl1" class="t fs" style="left:533.5px;top:560px;font-size:12px;color:#000;transform:scale(0.9006,1);transform-origin:0 16px;">Hauteur Etoile:</span>
<span id="rl2" class="t fs" style="left:534.5px;top:575px;font-size:12px;color:#000;transform:scale(0.8956,1);transform-origin:0 16px;">Hauteur Soleil:</span>
<span id="rl3" class="t fs" style="left:534.5px;top:591px;font-size:12px;color:#000;transform:scale(0.9071,1);transform-origin:0 16px;">Hauteur Lune:</span>
<span id="rl4" class="t fs" style="left:530.5px;top:606px;font-size:12px;color:#000;transform:scale(0.9118,1);transform-origin:0 16px;">Distance Lune:</span>
<span id="rv0" class="t fm" style="left:617px;top:535px;font-size:11px;color:#000;-webkit-text-stroke:0.2px;letter-spacing:0.396px;transform:scale(1.0000,0.93);transform-origin:0 15px;">Leo</span>
<span id="rv1" class="t fm" style="left:624px;top:561px;font-size:11px;color:#000;-webkit-text-stroke:0.2px;letter-spacing:0.397px;transform:scale(1.0000,0.93);transform-origin:0 15px;">41° S</span>
<span id="rv2" class="t fm" style="left:617px;top:576px;font-size:11px;color:#000;-webkit-text-stroke:0.2px;letter-spacing:0.398px;transform:scale(1.0000,0.93);transform-origin:0 15px;">-29°</span>
<span id="rv3" class="t fm" style="left:631px;top:592px;font-size:11px;color:#000;-webkit-text-stroke:0.2px;letter-spacing:0.397px;transform:scale(1.0000,0.93);transform-origin:0 15px;">9° SE</span>
<span id="rv4" class="t fm" style="left:624px;top:607px;font-size:11px;color:#000;-webkit-text-stroke:0.2px;letter-spacing:0.396px;transform:scale(1.0000,0.93);transform-origin:0 15px;">57°</span>
<svg style="left:15px;top:644px" width="16" height="16" viewBox="0 0 16 16">
<rect x="0.500" y="0.500" width="15" height="15" fill="#f4f2ea" stroke="#707070"/>
<path d="M1 1.200L15 5.600" stroke="#7474ee" stroke-width="1.700"/>
<path d="M1 8.200L15 14" stroke="#f87878" stroke-width="1.700"/>
<rect x="11.500" y="1.500" width="1.600" height="2.200" fill="#f4e438"/><rect x="13.800" y="2.800" width="1" height="1.200" fill="#f4e438"/>
<path d="M10.300 7l1 .3-.8 2.200-1-.4z" fill="#98c888"/><path d="M1.300 12l1.400.3-.9 2.200-.5-.1z" fill="#98c888"/>
</svg>
<span id="k1" class="t fs" style="left:33px;top:640px;font-size:12px;color:#0000ff;transform:scale(0.8880,1);transform-origin:0 16px;text-decoration:underline;text-decoration-thickness:1px;text-underline-offset:1px;">Carte en ligne avec stations</span>
<svg style="left:194px;top:644px" width="16" height="16" viewBox="0 0 16 16">
<rect x="0" y="0" width="16" height="16" fill="#d9d5cd"/>
<defs><linearGradient id="ieg" x1="0" y1="0" x2="0" y2="1"><stop offset="0" stop-color="#38b4f4"/><stop offset="0.500" stop-color="#1478d8"/><stop offset="1" stop-color="#2aa0ec"/></linearGradient></defs>
<path d="M8.400 2.200c3.600 0 6.300 2.700 6.300 6.200 0 .4 0 .8-.1 1.100H5.600c.3 1.500 1.400 2.400 2.900 2.400 1.100 0 2-.5 2.500-1.300h3.300c-.9 2.400-3.100 4-5.900 4-3.600 0-6.300-2.600-6.300-6.200s2.700-6.200 6.300-6.200zm0 2.500c-1.400 0-2.500.9-2.800 2.300h5.600c-.3-1.400-1.400-2.300-2.800-2.300z" fill="url(#ieg)" stroke="#0c4ea0" stroke-width="0.400"/>
<path d="M0.800 14.800C-.5 11.500 4 3.500 11 1c2-.7 3.500-.3 3.700 1-.6-.6-1.800-.5-3.300.2C6 4.600 1.800 11 2.400 14.200c.2.800.8 1 1.600.8-1.200 1-2.700 1-3.200-.2z" fill="#f8bc18" stroke="#d89a10" stroke-width="0.300"/>
</svg>
<span id="k2" class="t fs" style="left:211.5px;top:640px;font-size:12px;color:#0000ff;transform:scale(0.8816,1);transform-origin:0 16px;text-decoration:underline;text-decoration-thickness:1px;text-underline-offset:1px;">Détails sur le web</span>
<svg style="left:345px;top:644px" width="16" height="16" viewBox="0 0 16 16">
<defs><radialGradient id="geg" cx="0.350" cy="0.450" r="0.700"><stop offset="0" stop-color="#5070e4"/><stop offset="0.450" stop-color="#1e30a4"/><stop offset="1" stop-color="#0a1064"/></radialGradient><clipPath id="gec"><circle cx="8" cy="8" r="7.800"/></clipPath></defs>
<circle cx="8" cy="8" r="7.900" fill="url(#geg)"/>
<g clip-path="url(#gec)" fill="none" stroke="#f4f0e4" stroke-linecap="round">
<path d="M1.500 4.600C4.500 3 7 4 9.500 6.800c1.800 2 3.500 2.800 6 3.200" stroke-width="1.700"/>
<path d="M6.500 1.200c2.500.6 4.500 2.300 6.200 4.600 1 1.300 2 2 3 2.400" stroke-width="1.100"/>
<path d="M10.500 1.300c1.700.9 3.200 2.300 4.500 4.200" stroke-width="0.800"/>
<path d="M2.500 11.200c1.800.8 3.500 1.300 5.500 1.500 1.500.1 3.300 0 4.800-.4" stroke-width="1.100"/>
<path d="M3 13c1.500.8 3 1.200 4.500 1.300" stroke-width="0.900"/>
</g></svg>
<span id="k3" class="t fs" style="left:362.5px;top:640px;font-size:12px;color:#0000ff;transform:scale(0.8782,1);transform-origin:0 16px;text-decoration:underline;text-decoration-thickness:1px;text-underline-offset:1px;">Fichier kml 'Google Earth'</span>
<svg style="left:554px;top:644px" width="16" height="16" viewBox="0 0 16 16">
<rect width="16" height="16" fill="#060606"/>
<path d="M0 5L2.200 3.500 5 16H0z" fill="#7c7cbc"/>
<path d="M0 8l1.500-1 2 9H0z" fill="#a4a4e0" opacity="0.600"/>
<path d="M2 3L7 0.500l3 .5 5.500 8.500L16 14l-3 2H7z" fill="#2c2624"/>
<path d="M7 .8L15.500 12" stroke="#5c5048" stroke-width="0.800"/>
<ellipse cx="10.300" cy="8" rx="2.300" ry="6.200" transform="rotate(-24 10.300 8)" fill="#9aa29c"/>
<ellipse cx="10.400" cy="8.200" rx="0.900" ry="2.200" transform="rotate(-24 10.400 8.200)" fill="#6c9cec"/>
</svg>
<span id="k4" class="t fs" style="left:572.5px;top:640px;font-size:12px;color:#0000ff;transform:scale(0.8811,1);transform-origin:0 16px;text-decoration:underline;text-decoration-thickness:1px;text-underline-offset:1px;">Répartition des stations</span>
<div class="b" style="left:871px;top:620px;width:41px;height:42px;background:#fffff0;"></div>
<div class="b" style="left:872px;top:621px;width:40px;height:40px;background:#000;"></div>
<svg style="left:872px;top:621px" width="40" height="40" viewBox="0 0 40 40">
<defs><radialGradient id="mg" cx="0.500" cy="0.520" r="0.520"><stop offset="0" stop-color="#c0c0c0"/><stop offset="0.800" stop-color="#aaaaaa"/><stop offset="0.960" stop-color="#909090"/><stop offset="1" stop-color="#585858"/></radialGradient>
<filter id="mb" x="-20%" y="-20%" width="140%" height="140%"><feGaussianBlur stdDeviation="0.850"/></filter>
<filter id="mn" x="0" y="0" width="100%" height="100%"><feTurbulence type="fractalNoise" baseFrequency="0.330" numOctaves="3" seed="7" result="n"/><feColorMatrix in="n" type="matrix" values="0 0 0 0 1  0 0 0 0 1  0 0 0 0 1  1.600 0 0 0 -0.550"/></filter>
<filter id="mn2" x="0" y="0" width="100%" height="100%"><feTurbulence type="fractalNoise" baseFrequency="0.360" numOctaves="3" seed="23" result="n"/><feColorMatrix in="n" type="matrix" values="0 0 0 0 0.250  0 0 0 0 0.250  0 0 0 0 0.250  0 1.500 0 0 -0.500"/></filter>
<clipPath id="mc"><circle cx="20.700" cy="20" r="15.300"/></clipPath></defs>
<circle cx="20.700" cy="20" r="15.400" fill="url(#mg)"/>
<g clip-path="url(#mc)">
<g filter="url(#mb)">
<path d="M13 9c2-3 7-4 10-2 2 1.500 2 4 .5 6-1 1.500-3 2-4 4-1.500 1-4 .5-5.500-.5-2-1.500-2.500-5-1-7.500z" fill="#4c4c4c"/>
<ellipse cx="10.500" cy="15" rx="3" ry="4" fill="#585858"/>
<ellipse cx="29" cy="13" rx="3.500" ry="4" fill="#4e4e4e"/>
<ellipse cx="31" cy="21" rx="3" ry="4" fill="#545454"/>
<ellipse cx="12.500" cy="22.500" rx="3.500" ry="4.500" fill="#5a5a5a"/>
<ellipse cx="8" cy="20" rx="1.800" ry="4.500" fill="#707070"/>
<ellipse cx="27" cy="27" rx="2.600" ry="2.200" fill="#606060"/>
<ellipse cx="18" cy="26" rx="2" ry="1.500" fill="#747474"/>
<ellipse cx="21.500" cy="21" rx="2.500" ry="2.500" fill="#e6e6e6"/>
<ellipse cx="16" cy="31" rx="4.500" ry="2.600" fill="#f4f4f4"/>
<ellipse cx="23" cy="32.500" rx="4.500" ry="2" fill="#dadada"/>
<ellipse cx="26" cy="8" rx="3" ry="1.300" fill="#c8c8c8"/>
<ellipse cx="33.500" cy="15.500" rx="1" ry="2" fill="#dedede"/>
<ellipse cx="7.500" cy="26" rx="1.300" ry="2.500" fill="#c8c8c8"/>
<ellipse cx="25" cy="17" rx="1.500" ry="2" fill="#c4c4c4"/>
</g>
<rect width="40" height="40" filter="url(#mn)" opacity="0.380"/>
<rect width="40" height="40" filter="url(#mn2)" opacity="0.550"/>
</g></svg>
<div class="b" style="left:0px;top:664px;width:912px;height:1px;background:#dedede;"></div>
<div class="b" style="left:0px;top:667px;width:235px;height:20px;background:#a0a0a0;"></div>
<div class="b" style="left:1px;top:668px;width:234px;height:19px;background:#fff;"></div>
<div class="b" style="left:1px;top:668px;width:233px;height:18px;background:#f1f1f1;"></div>
<span id="sb" class="t fs" style="left:4.5px;top:666px;font-size:12.5px;color:#000;transform:scale(0.9245,1);transform-origin:0 16px;">Dernière mise à jour le 09/04/2020 12:21:49</span>
<div class="b" style="left:908px;top:677px;width:2px;height:2px;background:#8c8c8c;"></div>
<div class="b" style="left:904px;top:681px;width:2px;height:2px;background:#8c8c8c;"></div>
<div class="b" style="left:908px;top:681px;width:2px;height:2px;background:#8c8c8c;"></div>
<div class="b" style="left:900px;top:685px;width:2px;height:2px;background:#8c8c8c;"></div>
<div class="b" style="left:904px;top:685px;width:2px;height:2px;background:#8c8c8c;"></div>
<div class="b" style="left:908px;top:685px;width:2px;height:2px;background:#8c8c8c;"></div>
<div class="b" style="left:0px;top:689px;width:912px;height:1px;background:#fff;"></div>
<div class="b" style="left:0px;top:690px;width:912px;height:2px;background:linear-gradient(90deg,#222 0%,#383838 6%,#1a1a1a 14%,#303030 30%,#181818 42%,#4a4a4a 50%,#202020 60%,#5a5a5a 68%,#2a2a2a 76%,#1c1c1c 88%,#333 100%);"></div>
</body></html>
